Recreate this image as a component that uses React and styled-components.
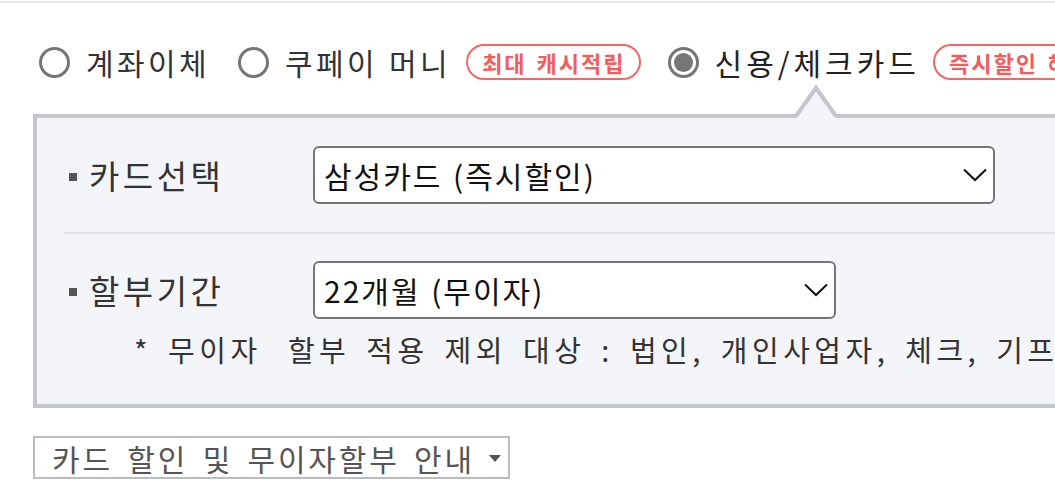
import React from 'react'
import styled, { createGlobalStyle } from 'styled-components'

const GlobalStyle = createGlobalStyle`
    html, body {
        margin: 0;
        padding: 0;
        background: #fff;
        overflow: hidden;
    }
    body {
        font-family: "Noto Sans CJK KR", "Noto Sans", sans-serif;
        color: #333;
    }
`;

const Page = styled.div`
    width: 1400px;
    margin-top: 1px;
    border-top: 2px solid #e6e6e6;
    padding: 41px 0 0 33px;
`;

const PayRow = styled.div`
    display: flex;
    align-items: center;
    height: 36px;
    padding-left: 6px;
    white-space: nowrap;
`;

const Option = styled.label`
    display: flex;
    align-items: center;
    gap: 16px;
    margin-right: ${props => props.$gap}px;
    font-size: 30px;
    line-height: 36px;
    letter-spacing: ${props => props.$checked ? 4 : 3.4}px;
    word-spacing: 1px;
    color: ${props => props.$checked ? '#222' : '#333'};
    cursor: pointer;
`;

const RadioMark = styled.span`
    box-sizing: border-box;
    width: 31px;
    height: 31px;
    border-radius: 50%;
    border: 3px solid #767676;
    background: #fff;
    display: flex;
    align-items: center;
    justify-content: center;

    &::after {
        content: "";
        width: 19px;
        height: 19px;
        border-radius: 50%;
        background: #767676;
        display: ${props => props.$checked ? 'block' : 'none'};
    }
`;

const Badge = styled.span`
    box-sizing: border-box;
    height: 36px;
    padding: 0 13px 0 14px;
    margin-right: ${props => props.$gap}px;
    border: 2.5px solid #f36767;
    border-radius: 18px;
    color: #f25c5c;
    font-size: 22px;
    font-weight: 700;
    line-height: 31px;
    letter-spacing: 2px;
    word-spacing: 3px;
    display: flex;
    align-items: center;
`;

const Panel = styled.section`
    position: relative;
    margin-top: 34px;
    border: 4px solid #c5c6cb;
    border-right: none;
    background: #f4f5f9;
    padding: 0 0 38px 27px;
`;

const Notch = styled.svg`
    position: absolute;
    left: 756px;
    top: -34px;
    width: 46px;
    height: 40px;
`;

const Row = styled.div`
    display: grid;
    grid-template-columns: 249px 1fr;
    align-items: center;
    padding: ${props => props.$first ? '28px 0 28px' : '27px 0 0'};
    border-bottom: ${props => props.$first ? '2px solid #e3e4e8' : 'none'};
`;

const Label = styled.div`
    display: flex;
    align-items: center;
    gap: 12px;
    padding-left: 5px;
    font-size: 33px;
    letter-spacing: 3.5px;
    color: #333;

    &::before {
        content: "";
        width: 8px;
        height: 8px;
        background: #555;
        margin-top: 4px;
    }
`;

const SelectBox = styled.div`
    box-sizing: border-box;
    width: ${props => props.$width}px;
    height: 58px;
    border: 2px solid #767676;
    border-radius: 6px;
    background: #fff;
    padding: 0 6px 0 9px;
    display: flex;
    align-items: center;
    justify-content: space-between;
    font-size: 30px;
    letter-spacing: 2px;
    word-spacing: 2px;
    color: #111;
    white-space: nowrap;
`;

const Chevron = styled.svg`
    width: 24px;
    height: 14px;
`;

const Note = styled.p`
    margin: 13px 0 0 70px;
    font-size: 29px;
    line-height: 34px;
    letter-spacing: 4.5px;
    word-spacing: 5px;
    color: #333;
    white-space: nowrap;
`;

const InfoButton = styled.button`
    box-sizing: border-box;
    margin-top: 28px;
    width: 477px;
    height: 43px;
    border: 2px solid #b9bcc3;
    background: #fff;
    padding: 0 0 0 17px;
    display: flex;
    align-items: center;
    gap: 14px;
    font-family: inherit;
    font-size: 30px;
    letter-spacing: 2.8px;
    word-spacing: 5px;
    white-space: nowrap;
    text-align: left;
    color: #555;
    cursor: pointer;

    &::after {
        content: "";
        flex-shrink: 0;
        border-left: 6px solid transparent;
        border-right: 6px solid transparent;
        border-top: 7px solid #555;
        margin-top: 2px;
    }
`;

function Select({ width, value }) {
    return (
        <SelectBox $width={width}>
            <span>{value}</span>
            <Chevron viewBox="0 0 24 14">
                <polyline points="1,1.5 12,12 23,1.5" fill="none" stroke="#111" strokeWidth="2" />
            </Chevron>
        </SelectBox>
    )
}

export default function App() {
    return (
        <>
            <GlobalStyle />
            <Page>
                <PayRow>
                    <Option $gap={28}>
                        <RadioMark />
                        계좌이체
                    </Option>
                    <Option $gap={15}>
                        <RadioMark />
                        쿠페이 머니
                    </Option>
                    <Badge $gap={27}>최대 캐시적립</Badge>
                    <Option $gap={13} $checked>
                        <RadioMark $checked />
                        신용/체크카드
                    </Option>
                    <Badge $gap={0}>즉시할인 혜택</Badge>
                </PayRow>

                <Panel>
                    <Notch viewBox="0 0 46 40">
                        <polygon points="3,34 23,4 43,34" fill="#f4f5f9" />
                        <polyline points="3,32 23,4 43,32" fill="none" stroke="#c5c6cb" strokeWidth="4" />
                    </Notch>
                    <Row $first>
                        <Label>카드선택</Label>
                        <Select width={682} value="삼성카드 (즉시할인)" />
                    </Row>
                    <Row>
                        <Label>할부기간</Label>
                        <Select width={523} value="22개월 (무이자)" />
                    </Row>
                    <Note>* 무이자{'\u2009'} 할부 적용 제외 대상 : 법인, 개인사업자, 체크, 기프트카드</Note>
                </Panel>

                <InfoButton>카드 할인 및 무이자할부 안내</InfoButton>
            </Page>
        </>
    )
}
